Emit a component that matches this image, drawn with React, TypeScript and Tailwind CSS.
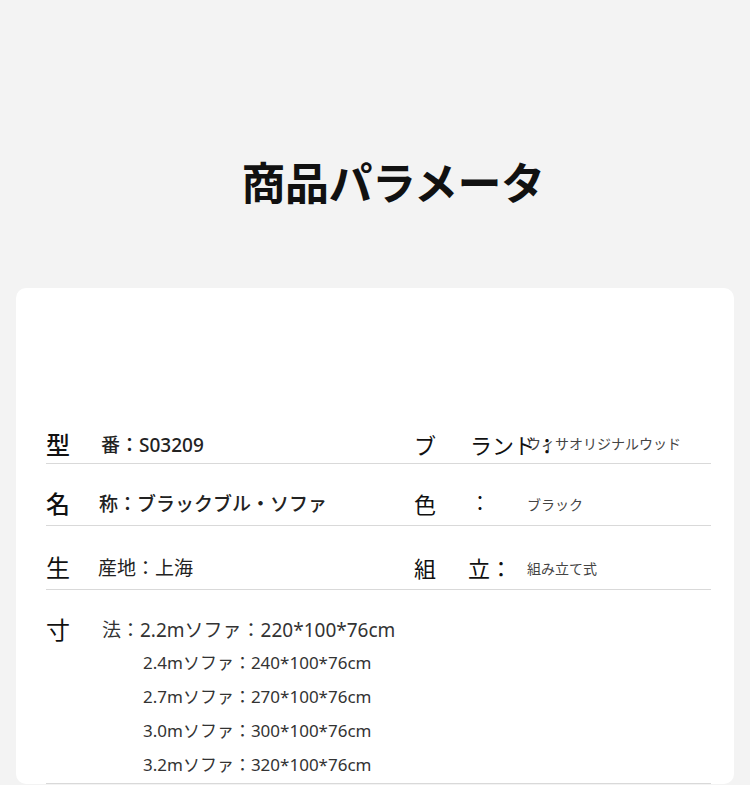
const font = { fontFamily: '"Noto Sans", "Noto Sans CJK JP", sans-serif' };

const dims = [
  '2.4mソファ：240*100*76cm',
  '2.7mソファ：270*100*76cm',
  '3.0mソファ：300*100*76cm',
  '3.2mソファ：320*100*76cm',
];

export default function App() {
  return (
    <div className="min-h-[785px] w-[750px] bg-[#f3f3f3] overflow-hidden" style={font}>
      {/* title */}
      <div className="flex justify-center pt-[161px] pb-[83px] pl-[36px]">
        <h1 className="text-[44px] leading-[44px] font-bold text-[#111] tracking-[-0.5px]">商品パラメータ</h1>
      </div>

      {/* card */}
      <div className="mx-[16px] bg-white rounded-[10px] pl-[30px] pr-[23px] pt-[144px]">
        {/* row 1 */}
        <div className="grid grid-cols-[368px_1fr] border-b border-[#d9d9d9] pb-[5px]">
          <div className="flex items-center h-[26px]">
            <span className="w-[55px] text-[24px] font-medium text-[#111]">型</span>
            <span className="text-[19px] font-medium text-[#222]">番：S03209</span>
          </div>
          <div className="flex items-center h-[26px]">
            <span className="w-[56px] text-[22px] text-[#111]">ブ</span>
            <span className="w-[57px] text-[22px] text-[#111] whitespace-nowrap">ランド：</span>
            <span className="text-[14px] text-[#444] -mt-[4px] relative">ウィサオリジナルウッド</span>
          </div>
        </div>

        {/* row 2 */}
        <div className="grid grid-cols-[368px_1fr] border-b border-[#d9d9d9] pt-[27px] pb-[8px]">
          <div className="flex items-center h-[26px]">
            <span className="w-[53px] text-[24px] font-medium text-[#111]">名</span>
            <span className="text-[19px] font-medium text-[#222]">称：ブラックブル・ソファ</span>
          </div>
          <div className="flex items-center h-[26px]">
            <span className="w-[56px] text-[22px] text-[#111]">色</span>
            <span className="w-[57px] text-[20px] text-[#111]">：</span>
            <span className="text-[14px] text-[#444]">ブラック</span>
          </div>
        </div>

        {/* row 3 */}
        <div className="grid grid-cols-[368px_1fr] border-b border-[#d9d9d9] pt-[29px] pb-[8px]">
          <div className="flex items-center h-[26px]">
            <span className="w-[52px] text-[24px] text-[#111]">生</span>
            <span className="text-[19px] text-[#222]">産地：上海</span>
          </div>
          <div className="flex items-center h-[26px]">
            <span className="w-[54px] text-[22px] text-[#111]">組</span>
            <span className="w-[59px] text-[22px] text-[#111] whitespace-nowrap">立：</span>
            <span className="text-[14px] text-[#444]">組み立て式</span>
          </div>
        </div>

        {/* row 4 */}
        <div className="border-b border-[#d9d9d9] pt-[27px] pb-[1px]">
          <div className="flex">
            <span className="w-[56px] text-[24px] leading-[26px] text-[#111]">寸</span>
            <div className="flex flex-col text-[#333]">
              <span className="text-[19px] leading-[26px]">法：2.2mソファ：220*100*76cm</span>
              <div className="flex flex-col pl-[41px] pt-[3px]">
                {dims.map((d) => (
                  <span key={d} className="text-[17px] leading-[34px]">{d}</span>
                ))}
              </div>
            </div>
          </div>
        </div>
      </div>
    </div>
  );
}
